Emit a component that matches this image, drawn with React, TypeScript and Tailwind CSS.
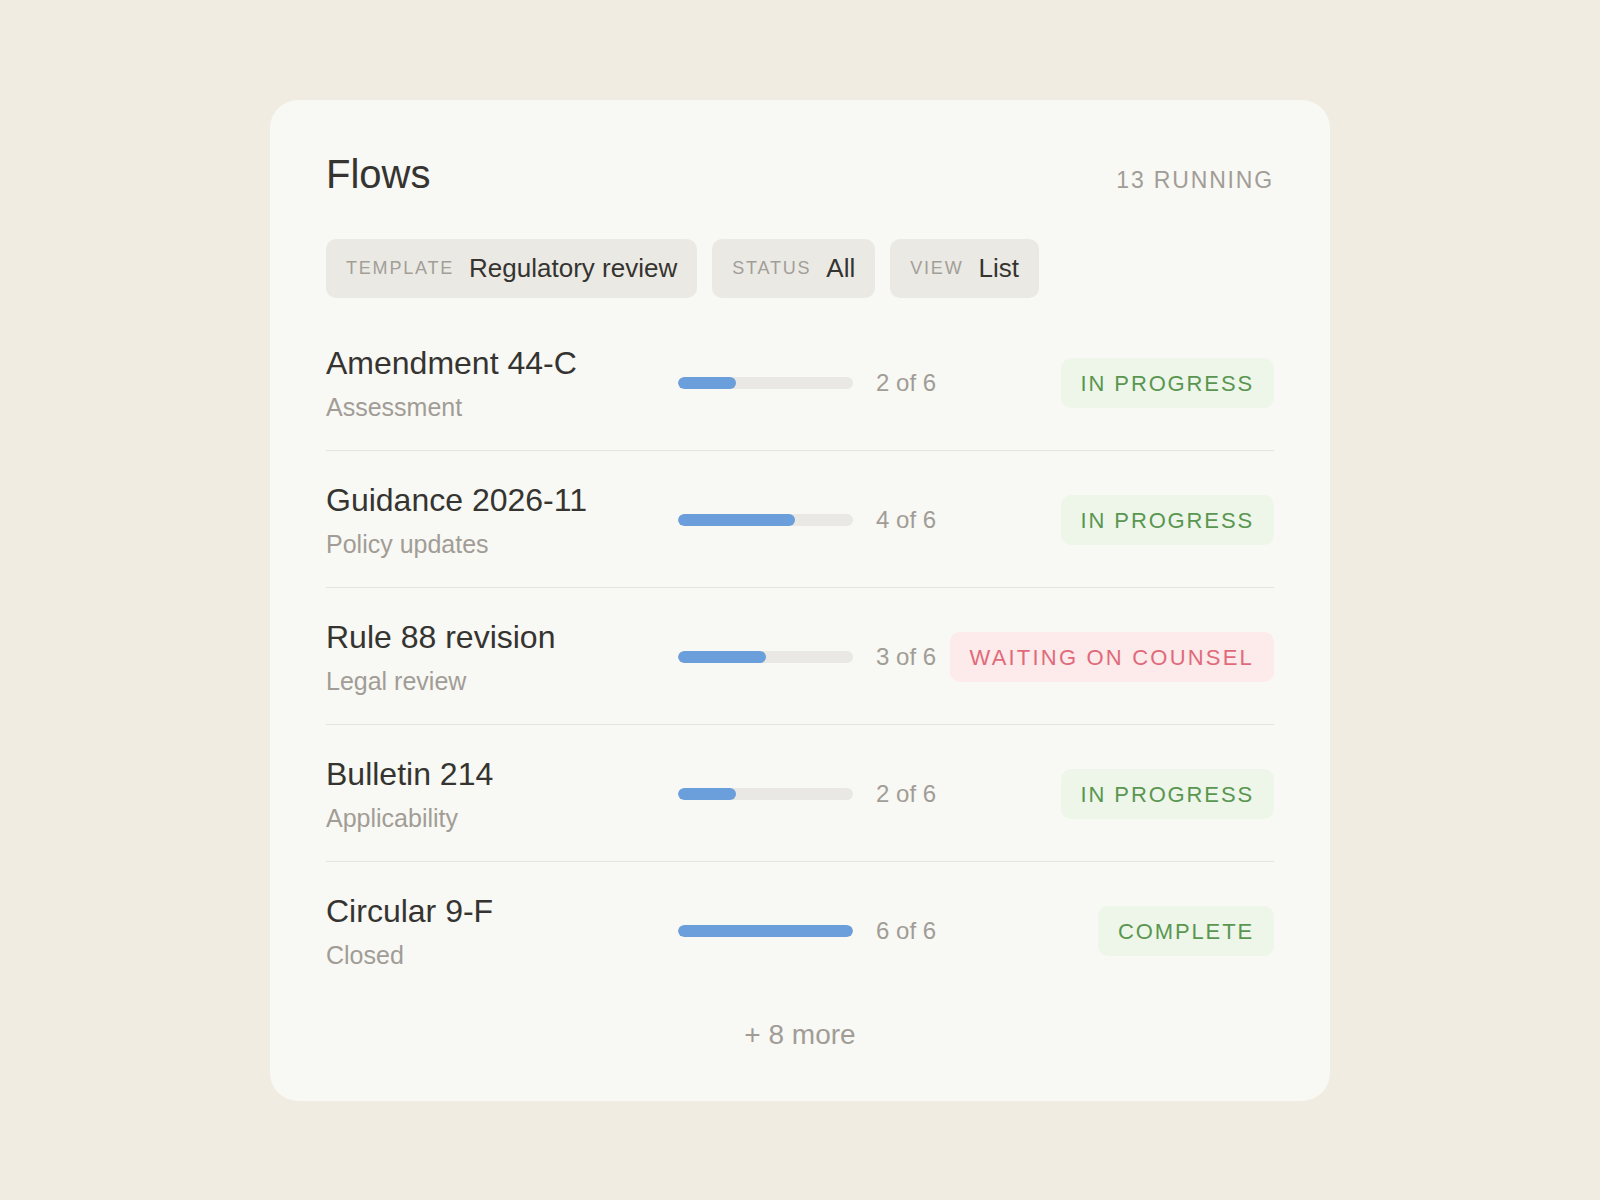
import React from "react";

type Status = "progress" | "waiting" | "complete";

const flows: { id: number; name: string; step: string; done: number; total: number; status: Status }[] = [
  { id: 1, name: "Amendment 44-C", step: "Assessment", done: 2, total: 6, status: "progress" },
  { id: 2, name: "Guidance 2026-11", step: "Policy updates", done: 4, total: 6, status: "progress" },
  { id: 3, name: "Rule 88 revision", step: "Legal review", done: 3, total: 6, status: "waiting" },
  { id: 4, name: "Bulletin 214", step: "Applicability", done: 2, total: 6, status: "progress" },
  { id: 5, name: "Circular 9-F", step: "Closed", done: 6, total: 6, status: "complete" },
];

const filters = [
  { label: "TEMPLATE", value: "Regulatory review" },
  { label: "STATUS", value: "All" },
  { label: "VIEW", value: "List" },
];

function StatusBadge({ status }: { status: Status }) {
  if (status === "waiting") {
    return (
      <span className="flex h-[50px] items-center rounded-[10px] bg-[#fdeaea] px-5 text-[22px] tracking-[0.1em] text-[#e06a7b]">
        WAITING ON COUNSEL
      </span>
    );
  }
  return (
    <span className="flex h-[50px] items-center rounded-[10px] bg-[#edf6e9] px-5 text-[22px] tracking-[0.085em] text-[#5a9651]">
      {status === "complete" ? "COMPLETE" : "IN PROGRESS"}
    </span>
  );
}

export default function App() {
  return (
    <div
      className="flex min-h-screen items-center justify-center bg-[#f1ece1]"
      style={{ fontFamily: '"Liberation Sans", Arial, sans-serif' }}
    >
      <div className="w-[1060px] rounded-[28px] bg-[#f8f8f4] px-14 pt-[50px] pb-[45px]">
        <header className="flex items-baseline justify-between">
          <h1 className="text-[40px] leading-[48px] text-[#353430]">Flows</h1>
          <span className="text-[23px] tracking-[0.08em] text-[#a19d96]">13 RUNNING</span>
        </header>

        <div className="mt-[41px] flex gap-[15px]">
          {filters.map((f) => (
            <div
              key={f.label}
              className="flex h-[59px] items-center gap-[15px] rounded-[10px] bg-[#ebe9e4] px-5"
            >
              <span className="text-[18px] tracking-[0.1em] text-[#a29e98]">{f.label}</span>
              <span className="text-[26px] text-[#353430]">{f.value}</span>
            </div>
          ))}
        </div>

        <div className="mt-[16px]">
          {flows.map((flow, i) => (
            <div
              key={flow.id}
              className={`flex items-center pt-[30px] pb-[27px] ${
                i < flows.length - 1 ? "border-b border-[#e6e4df]" : ""
              }`}
            >
              <div className="w-[352px] shrink-0">
                <div className="text-[32px] leading-[38px] text-[#353430]">{flow.name}</div>
                <div className="mt-[9px] text-[25px] leading-[32px] text-[#a19d96]">{flow.step}</div>
              </div>
              <div className="h-3 w-[175px] shrink-0 overflow-hidden rounded-full bg-[#eae8e4]">
                <div
                  className="h-full rounded-full bg-[#6b9fdc]"
                  style={{ width: `${(flow.done / flow.total) * 100}%` }}
                />
              </div>
              <span className="ml-[23px] text-[24px] text-[#a19d96]">
                {flow.done} of {flow.total}
              </span>
              <div className="ml-auto">
                <StatusBadge status={flow.status} />
              </div>
            </div>
          ))}
        </div>

        <div className="mt-[16px] text-center text-[28px] text-[#a19d96]">+ 8 more</div>
      </div>
    </div>
  );
}
